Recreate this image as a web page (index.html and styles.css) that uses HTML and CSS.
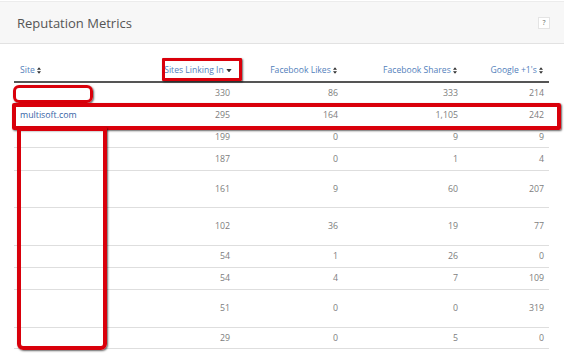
FILE: index.html
```html
<!DOCTYPE html>
<html>
<head>
<meta charset="utf-8">
<link rel="stylesheet" href="styles.css">
</head>
<body>
<div class="panel">
  <div class="panel-head">
    <h2 class="title">Reputation Metrics</h2>
    <span class="help">?</span>
  </div>
  <div class="panel-body">
    <table class="metrics">
      <colgroup>
        <col class="c-site"><col class="c-links"><col class="c-likes"><col class="c-shares"><col class="c-plus">
      </colgroup>
      <thead>
        <tr>
          <th class="left">Site <svg class="sort" viewBox="0 0 5 8"><path d="M2.5 0L5 3.2H0z M2.5 8L5 4.8H0z"/></svg></th>
          <th class="sorted">Sites Linking In <svg class="caret" viewBox="0 0 6 4"><path d="M0 0H6L3 4z"/></svg></th>
          <th>Facebook Likes <svg class="sort" viewBox="0 0 5 8"><path d="M2.5 0L5 3.2H0z M2.5 8L5 4.8H0z"/></svg></th>
          <th>Facebook Shares <svg class="sort" viewBox="0 0 5 8"><path d="M2.5 0L5 3.2H0z M2.5 8L5 4.8H0z"/></svg></th>
          <th>Google +1's <svg class="sort" viewBox="0 0 5 8"><path d="M2.5 0L5 3.2H0z M2.5 8L5 4.8H0z"/></svg></th>
        </tr>
      </thead>
      <tbody>
        <tr class="h22"><td class="left"></td><td>330</td><td>86</td><td>333</td><td>214</td></tr>
        <tr class="h22"><td class="left"><a class="site">multisoft.com</a></td><td>295</td><td>164</td><td>1,105</td><td>242</td></tr>
        <tr class="h21"><td class="left"></td><td>199</td><td>0</td><td>9</td><td>9</td></tr>
        <tr class="h23"><td class="left"></td><td>187</td><td>0</td><td>1</td><td>4</td></tr>
        <tr class="h37"><td class="left"></td><td>161</td><td>9</td><td>60</td><td>207</td></tr>
        <tr class="h38"><td class="left"></td><td>102</td><td>36</td><td>19</td><td>77</td></tr>
        <tr class="h22"><td class="left"></td><td>54</td><td>1</td><td>26</td><td>0</td></tr>
        <tr class="h22"><td class="left"></td><td>54</td><td>4</td><td>7</td><td>109</td></tr>
        <tr class="h38"><td class="left"></td><td>51</td><td>0</td><td>0</td><td>319</td></tr>
        <tr class="h21"><td class="left"></td><td>29</td><td>0</td><td>5</td><td>0</td></tr>
      </tbody>
    </table>
  </div>
</div>
<div class="mark mark-sort"></div>
<div class="mark mark-first"></div>
<div class="mark mark-row"></div>
<div class="mark mark-col"></div>
</body>
</html>
```

FILE: styles.css
```css
html, body {
  margin: 0;
  padding: 0;
  background: #ffffff;
  font-family: "Open Sans", "Liberation Sans", sans-serif;
}
body {
  position: relative;
  width: 564px;
  height: 355px;
  overflow: hidden;
}
.panel {
  margin-top: 1px;
  border-top: 1px solid #ececec;
}
.panel-head {
  height: 41px;
  background: #f7f7f7;
  border-bottom: 1px solid #e2e2e2;
  display: flex;
  align-items: center;
  justify-content: space-between;
  padding: 0 14px 0 17px;
}
.title {
  margin: 0;
  font-size: 13px;
  font-weight: 400;
  color: #555;
}
.help {
  width: 10px;
  height: 10px;
  border: 1px solid #e4e4e4;
  background: #fff;
  font-size: 7px;
  line-height: 10px;
  text-align: center;
  color: #666;
}
.panel-body {
  padding: 15px 15px 0 14px;
}
.metrics {
  width: 535px;
  border-collapse: collapse;
  table-layout: fixed;
  font-size: 8.8px;
  color: #7d7d7d;
}
.c-site { width: 146px; }
.c-links { width: 75px; }
.c-likes { width: 108px; }
.c-shares { width: 120px; }
.c-plus { width: 86px; }
.metrics th {
  height: 22px;
  padding: 0 6px 0 0;
  text-align: right;
  font-weight: 400;
  font-size: 8.6px;
  color: #5280bb;
  border-bottom: 2px solid #555;
  vertical-align: middle;
  white-space: nowrap;
}
.metrics th.sorted {
  padding-right: 3px;
}
.metrics td {
  padding: 0 5px 0 0;
  text-align: right;
  vertical-align: middle;
  border-bottom: 1px solid #dedede;
}
.metrics .left {
  text-align: left;
  padding-left: 6px;
}
.sort {
  width: 4px;
  height: 7px;
  fill: #333;
  vertical-align: -1px;
}
.caret {
  width: 6px;
  height: 3.5px;
  fill: #333;
  vertical-align: 1px;
}
.site {
  color: #3563a6;
}
.h21 { height: 21px; }
.h22 { height: 22px; }
.h23 { height: 23px; }
.h37 { height: 37px; }
.h38 { height: 38px; }
.mark {
  position: absolute;
  box-sizing: border-box;
  border: 3px solid #d9000b;
  box-shadow: 1px 1px 2px rgba(0,0,0,0.6);
}
.mark-sort {
  left: 162px;
  top: 58px;
  width: 80px;
  height: 23px;
  border-radius: 1px;
}
.mark-first {
  left: 13px;
  top: 85px;
  width: 80px;
  height: 18px;
  border-radius: 6px;
}
.mark-row {
  left: 12px;
  top: 103px;
  width: 549px;
  height: 27px;
  border-width: 4px;
  border-radius: 2px;
}
.mark-col {
  left: 17px;
  top: 127px;
  width: 90px;
  height: 223px;
  border-width: 4px;
  border-radius: 2px 2px 6px 6px;
}
```
